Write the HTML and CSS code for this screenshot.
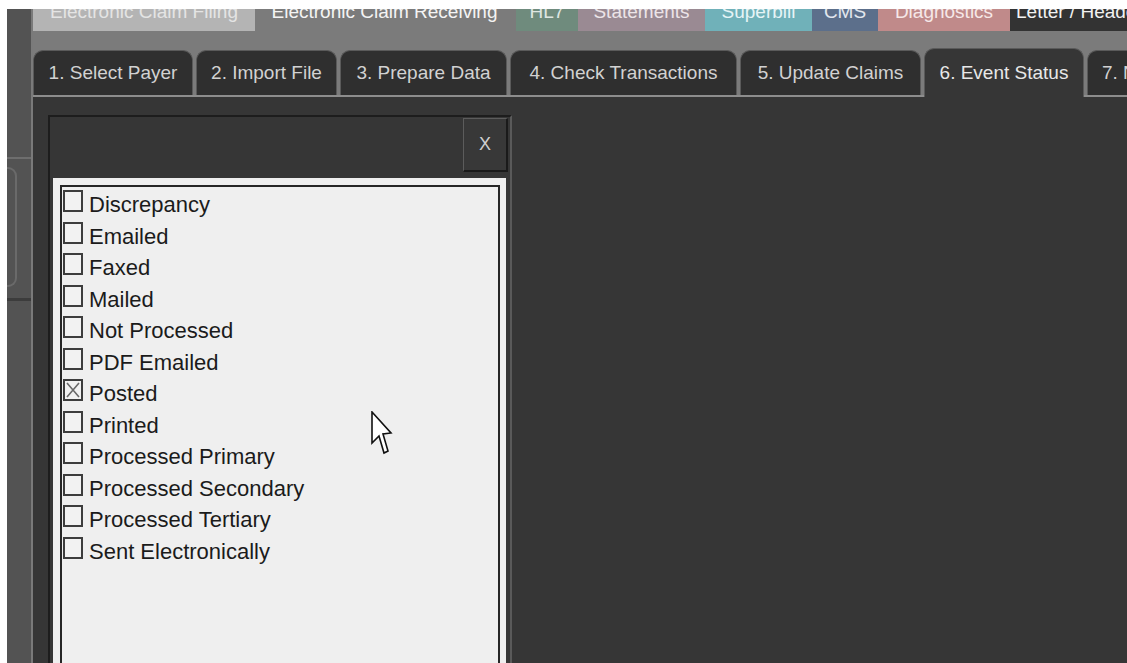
FILE: index.html
```html
<!DOCTYPE html>
<html lang="en">
<head>
<meta charset="utf-8">
<title>Electronic Claim Receiving – Event Status</title>
<link rel="stylesheet" href="styles.css">
</head>
<body>
<div class="app">
  <aside class="rail">
    <div class="rail-rule"></div>
    <div class="rail-grip"></div>
    <div class="rail-rule rail-rule-dark"></div>
  </aside>

  <div class="workspace">
    <nav class="modules">
      <div class="module m-filing"><span>Electronic Claim Filing</span></div>
      <div class="module m-receiving"><span>Electronic Claim Receiving</span></div>
      <div class="module m-hl7"><span>HL7</span></div>
      <div class="module m-statements"><span>Statements</span></div>
      <div class="module m-superbill"><span>Superbill</span></div>
      <div class="module m-cms"><span>CMS</span></div>
      <div class="module m-diagnostics"><span>Diagnostics</span></div>
      <div class="module m-letter"><span>Letter / Header</span></div>
    </nav>

    <nav class="steps">
      <div class="step s1">1. Select Payer</div>
      <div class="step s2">2. Import File</div>
      <div class="step s3">3. Prepare Data</div>
      <div class="step s4">4. Check Transactions</div>
      <div class="step s5">5. Update Claims</div>
      <div class="step s6 active">6. Event Status</div>
      <div class="step s7">7. Notes</div>
    </nav>

    <main class="stage">
      <section class="filter-panel">
        <header class="panel-head">
          <button class="close" type="button">X</button>
        </header>
        <div class="panel-body">
          <ul class="status-list">
            <li><span class="box"></span>Discrepancy</li>
            <li><span class="box"></span>Emailed</li>
            <li><span class="box"></span>Faxed</li>
            <li><span class="box"></span>Mailed</li>
            <li><span class="box"></span>Not Processed</li>
            <li><span class="box"></span>PDF Emailed</li>
            <li><span class="box checked"><svg viewBox="0 0 16 18" width="16" height="18"><path d="M2 2 L14 16 M14 2 L2 16" stroke="#6a6a6a" stroke-width="1.6" fill="none"/></svg></span>Posted</li>
            <li><span class="box"></span>Printed</li>
            <li><span class="box"></span>Processed Primary</li>
            <li><span class="box"></span>Processed Secondary</li>
            <li><span class="box"></span>Processed Tertiary</li>
            <li><span class="box"></span>Sent Electronically</li>
          </ul>
        </div>
      </section>

      <svg class="pointer" width="22" height="44" viewBox="0 0 22 44">
        <path d="M1 1 L1 32 L8 25 L13 42 L17 40 L12 23 L20 22 Z" fill="#ffffff" stroke="#111111" stroke-width="1.6" stroke-linejoin="miter"/>
      </svg>
    </main>
  </div>
</div>
</body>
</html>
```

FILE: styles.css
```css
html, body {
  margin: 0;
  background: #ffffff;
  overflow: hidden;
  font-family: "Liberation Sans", Arial, sans-serif;
}

body {
  padding: 9px 0 0 7px;
  height: 663px;
  box-sizing: border-box;
}

.app {
  display: flex;
  height: 654px;
}

/* left dock rail */
.rail {
  flex: none;
  width: 24px;
  background: #535353;
  border-right: 2px solid #7a7a7a;
  display: flex;
  flex-direction: column;
  padding-top: 148px;
}

.rail-rule {
  height: 2px;
  background: #6e6e6e;
}

.rail-rule-dark {
  margin-top: 11px;
  height: 3px;
  background: #3c3c3c;
}

.rail-grip {
  margin-top: 8px;
  width: 10px;
  height: 120px;
  box-sizing: border-box;
  border: 2px solid #6a6a6a;
  border-left: 0;
  border-radius: 0 9px 9px 0;
}

.workspace {
  flex: 1;
  min-width: 0;
  display: flex;
  flex-direction: column;
  overflow: hidden;
}

/* module tabs across the top; labels run under the window edge */
.modules {
  flex: none;
  display: flex;
  height: 22px;
  overflow: hidden;
  background: #7b7b7b;
}

.module {
  flex: none;
  height: 22px;
  font-size: 19px;
  color: #ececec;
  text-align: center;
  white-space: nowrap;
}

.module span {
  display: block;
  line-height: 19px;
  margin-top: -7px;
}

.m-filing { width: 222px; background: #b4b4b4; color: #e4e4e4; }
.m-receiving { width: 259px; background: #7b7b7b; color: #f4f4f4; }
.m-hl7 { width: 62px; margin-left: 2px; background: #6f8b7d; color: #dfe6e2; }
.m-statements { width: 127px; background: #9a8a93; color: #ece4e8; }
.m-superbill { width: 107px; background: #70b1b9; color: #e6f4f6; }
.m-cms { width: 66px; background: #5c6f8b; color: #e2e7ee; }
.m-diagnostics { width: 132px; background: #c08a8a; color: #f6e8e8; }
.m-letter { flex: 1; background: #333333; color: #f2f2f2; text-align: left; padding-left: 6px; }

/* workflow step tabs */
.steps {
  flex: none;
  display: flex;
  align-items: flex-end;
  gap: 3px;
  height: 66px;
  background: #7b7b7b;
  box-shadow: inset 0 -2px 0 #8d8d8d;
}

.step {
  flex: none;
  height: 45px;
  margin-bottom: 2px;
  box-sizing: border-box;
  background: #2f2f2f;
  border: 1px solid #5a5a5a;
  border-bottom: 0;
  border-radius: 10px 10px 0 0;
  color: #d2d2d2;
  font-size: 19px;
  line-height: 44px;
  text-align: center;
  white-space: nowrap;
}

.step.active {
  height: 49px;
  margin-bottom: 0;
  background: #363636;
  color: #e8e8e8;
  line-height: 48px;
}

.s1 { width: 160px; }
.s2 { width: 141px; }
.s3 { width: 167px; }
.s4 { width: 227px; }
.s5 { width: 181px; }
.s6 { width: 160px; }
.s7 { width: 160px; text-align: left; padding-left: 14px; }

/* main work area */
.stage {
  flex: 1;
  position: relative;
  background: #363636;
  padding: 18px 0 0 15px;
  overflow: hidden;
}

.filter-panel {
  width: 464px;
  height: 620px;
  box-sizing: border-box;
  border: 2px solid #1d1d1d;
  border-right-color: #5a5a5a;
  border-bottom: 0;
  display: flex;
  flex-direction: column;
}

.panel-head {
  flex: none;
  height: 61px;
  box-sizing: border-box;
  display: flex;
  justify-content: flex-end;
  align-items: flex-start;
  padding: 1px 2px 0 0;
}

.close {
  width: 45px;
  height: 54px;
  box-sizing: border-box;
  padding: 0;
  background: #383838;
  border: 1px solid #5c5c5c;
  border-right: 2px solid #1a1a1a;
  border-bottom: 2px solid #1a1a1a;
  color: #cfcfcf;
  font-family: "Liberation Sans", Arial, sans-serif;
  font-size: 18px;
}

.panel-body {
  flex: 1;
  display: flex;
  flex-direction: column;
  background: #efefef;
  margin: 0 4px 0 3px;
  padding: 7px 6px 0 7px;
}

.status-list {
  flex: 1;
  list-style: none;
  margin: 0;
  padding: 2px 0 0 1px;
  border: 2px solid #262626;
  border-bottom: 0;
}

.status-list li {
  display: flex;
  align-items: flex-start;
  height: 31.5px;
  line-height: 31.5px;
  font-size: 22px;
  color: #1b1b1b;
  white-space: nowrap;
}

.box {
  flex: none;
  width: 20px;
  height: 22px;
  box-sizing: border-box;
  margin: 1px 6px 0 0;
  border: 2px solid #3d3d3d;
  background: #f2f2f2;
  display: flex;
  align-items: center;
  justify-content: center;
}

.box svg {
  display: block;
}

.pointer {
  position: absolute;
  left: 338px;
  top: 314px;
}
```
